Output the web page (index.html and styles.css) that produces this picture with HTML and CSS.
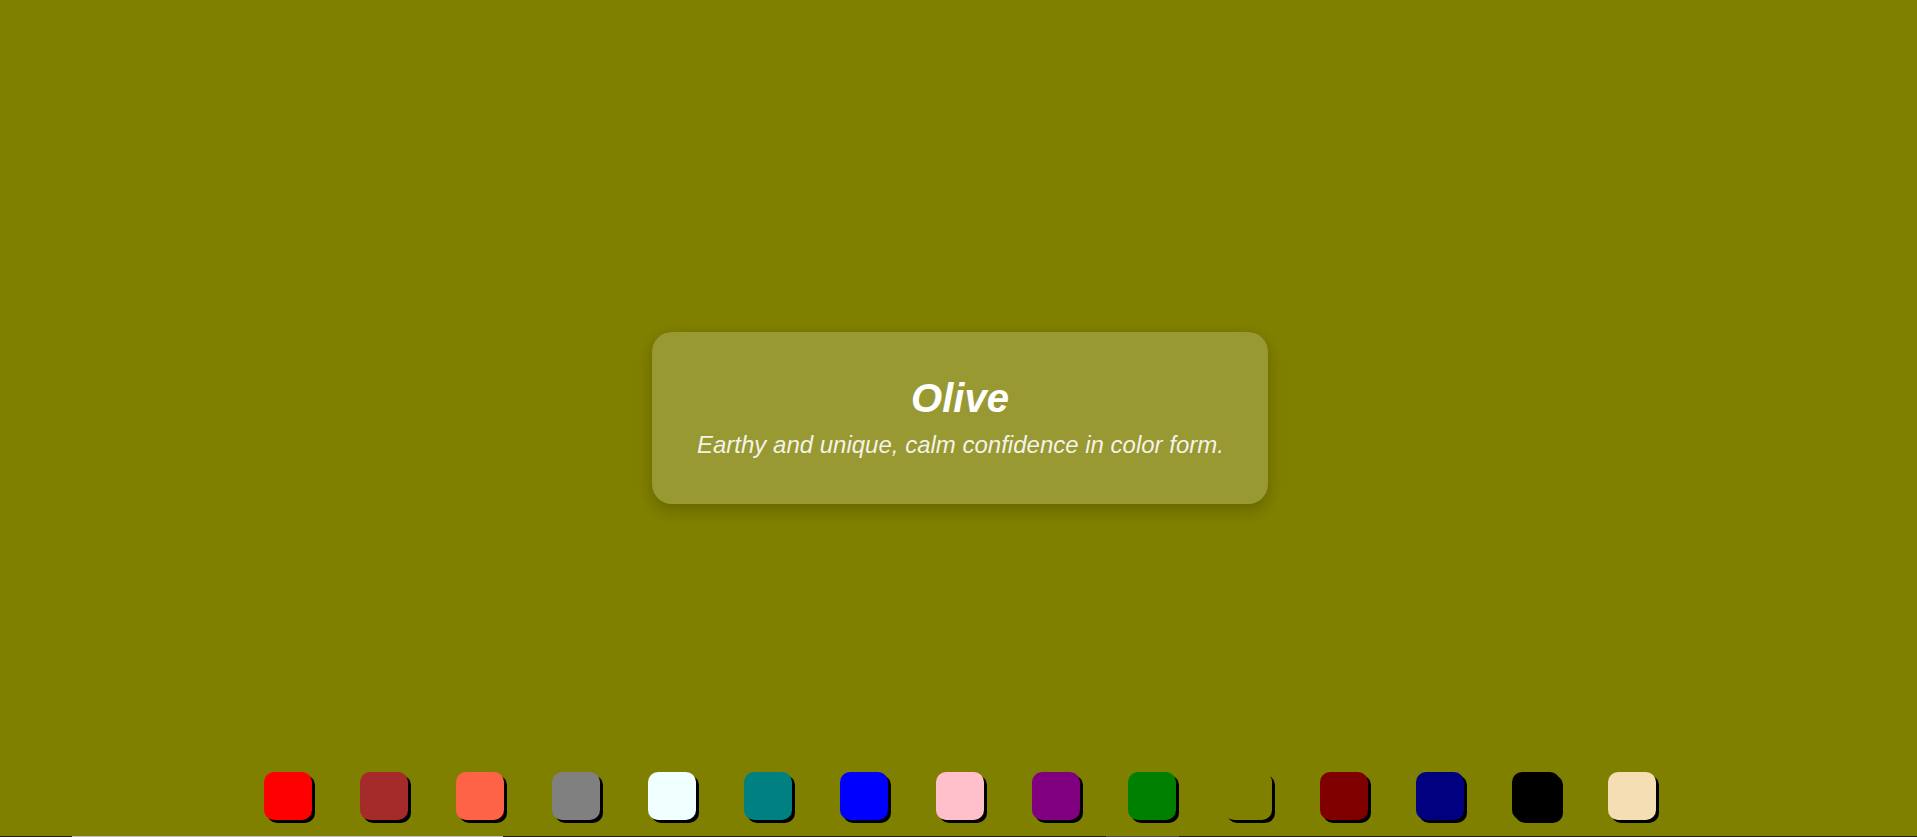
FILE: index.html
```html
<!DOCTYPE html>
<html lang="en">
<head>
<meta charset="utf-8">
<title>Olive</title>
<link rel="stylesheet" href="styles.css">
</head>
<body>
<div class="page">
  <div class="spacer"></div>
  <div class="card">
    <h1 class="card-title">Olive</h1>
    <p class="card-text">Earthy and unique, calm confidence in color form.</p>
  </div>
  <div class="palette-row">
    <div class="palette">
      <div class="swatch red"></div>
      <div class="swatch brown"></div>
      <div class="swatch tomato"></div>
      <div class="swatch gray"></div>
      <div class="swatch azure"></div>
      <div class="swatch teal"></div>
      <div class="swatch blue"></div>
      <div class="swatch pink"></div>
      <div class="swatch purple"></div>
      <div class="swatch green"></div>
      <div class="swatch olive"></div>
      <div class="swatch maroon"></div>
      <div class="swatch navy"></div>
      <div class="swatch black"></div>
      <div class="swatch wheat"></div>
    </div>
  </div>
  <div class="scrollstrip"></div>
</div>
</body>
</html>
```

FILE: styles.css
```css
html, body {
  margin: 0;
  padding: 0;
  height: 100%;
  overflow: hidden;
}

body {
  background: #808000;
  font-family: "Liberation Sans", Arial, sans-serif;
}

.page {
  width: 1920px;
  height: 100vh;
  display: grid;
  grid-template-rows: 1fr auto 1fr 1px;
  justify-items: center;
}

.card {
  width: 526px;
  padding: 44px 45px 45px;
  background: rgba(255, 255, 255, 0.2);
  border-radius: 20px;
  box-shadow: 0 6px 18px rgba(0, 0, 0, 0.22);
  text-align: center;
  color: #ffffff;
}

.card-title {
  margin: 0 0 10px;
  font-size: 40px;
  font-weight: bold;
  font-style: italic;
  line-height: normal;
}

.card-text {
  margin: 0;
  font-size: 24px;
  font-style: italic;
  line-height: normal;
  color: rgba(255, 255, 255, 0.9);
  white-space: nowrap;
}

.palette-row {
  align-self: end;
  padding-bottom: 16px;
}

.palette {
  display: flex;
  gap: 48px;
}

.swatch {
  width: 48px;
  height: 48px;
  border-radius: 10px;
  box-shadow: 3px 3px 0 #000000;
}

.red { background: #ff0000; }
.brown { background: #a52a2a; }
.tomato { background: #ff6347; }
.gray { background: #808080; }
.azure { background: #f0ffff; }
.teal { background: #008080; }
.blue { background: #0000ff; }
.pink { background: #ffc0cb; }
.purple { background: #800080; }
.green { background: #008000; }
.olive { background: #808000; }
.maroon { background: #800000; }
.navy { background: #000080; }
.black { background: #000000; }
.wheat { background: #f5deb3; }

.scrollstrip {
  width: 100%;
  height: 1px;
  background: linear-gradient(to right,
    #1f1f1f 0, #1f1f1f 72px,
    #c1c1c1 72px, #c1c1c1 503px,
    #1f1f1f 503px, #1f1f1f 1106px,
    #4d4d4d 1106px, #4d4d4d 1179px,
    #1f1f1f 1179px, #1f1f1f 100%);
}
```
